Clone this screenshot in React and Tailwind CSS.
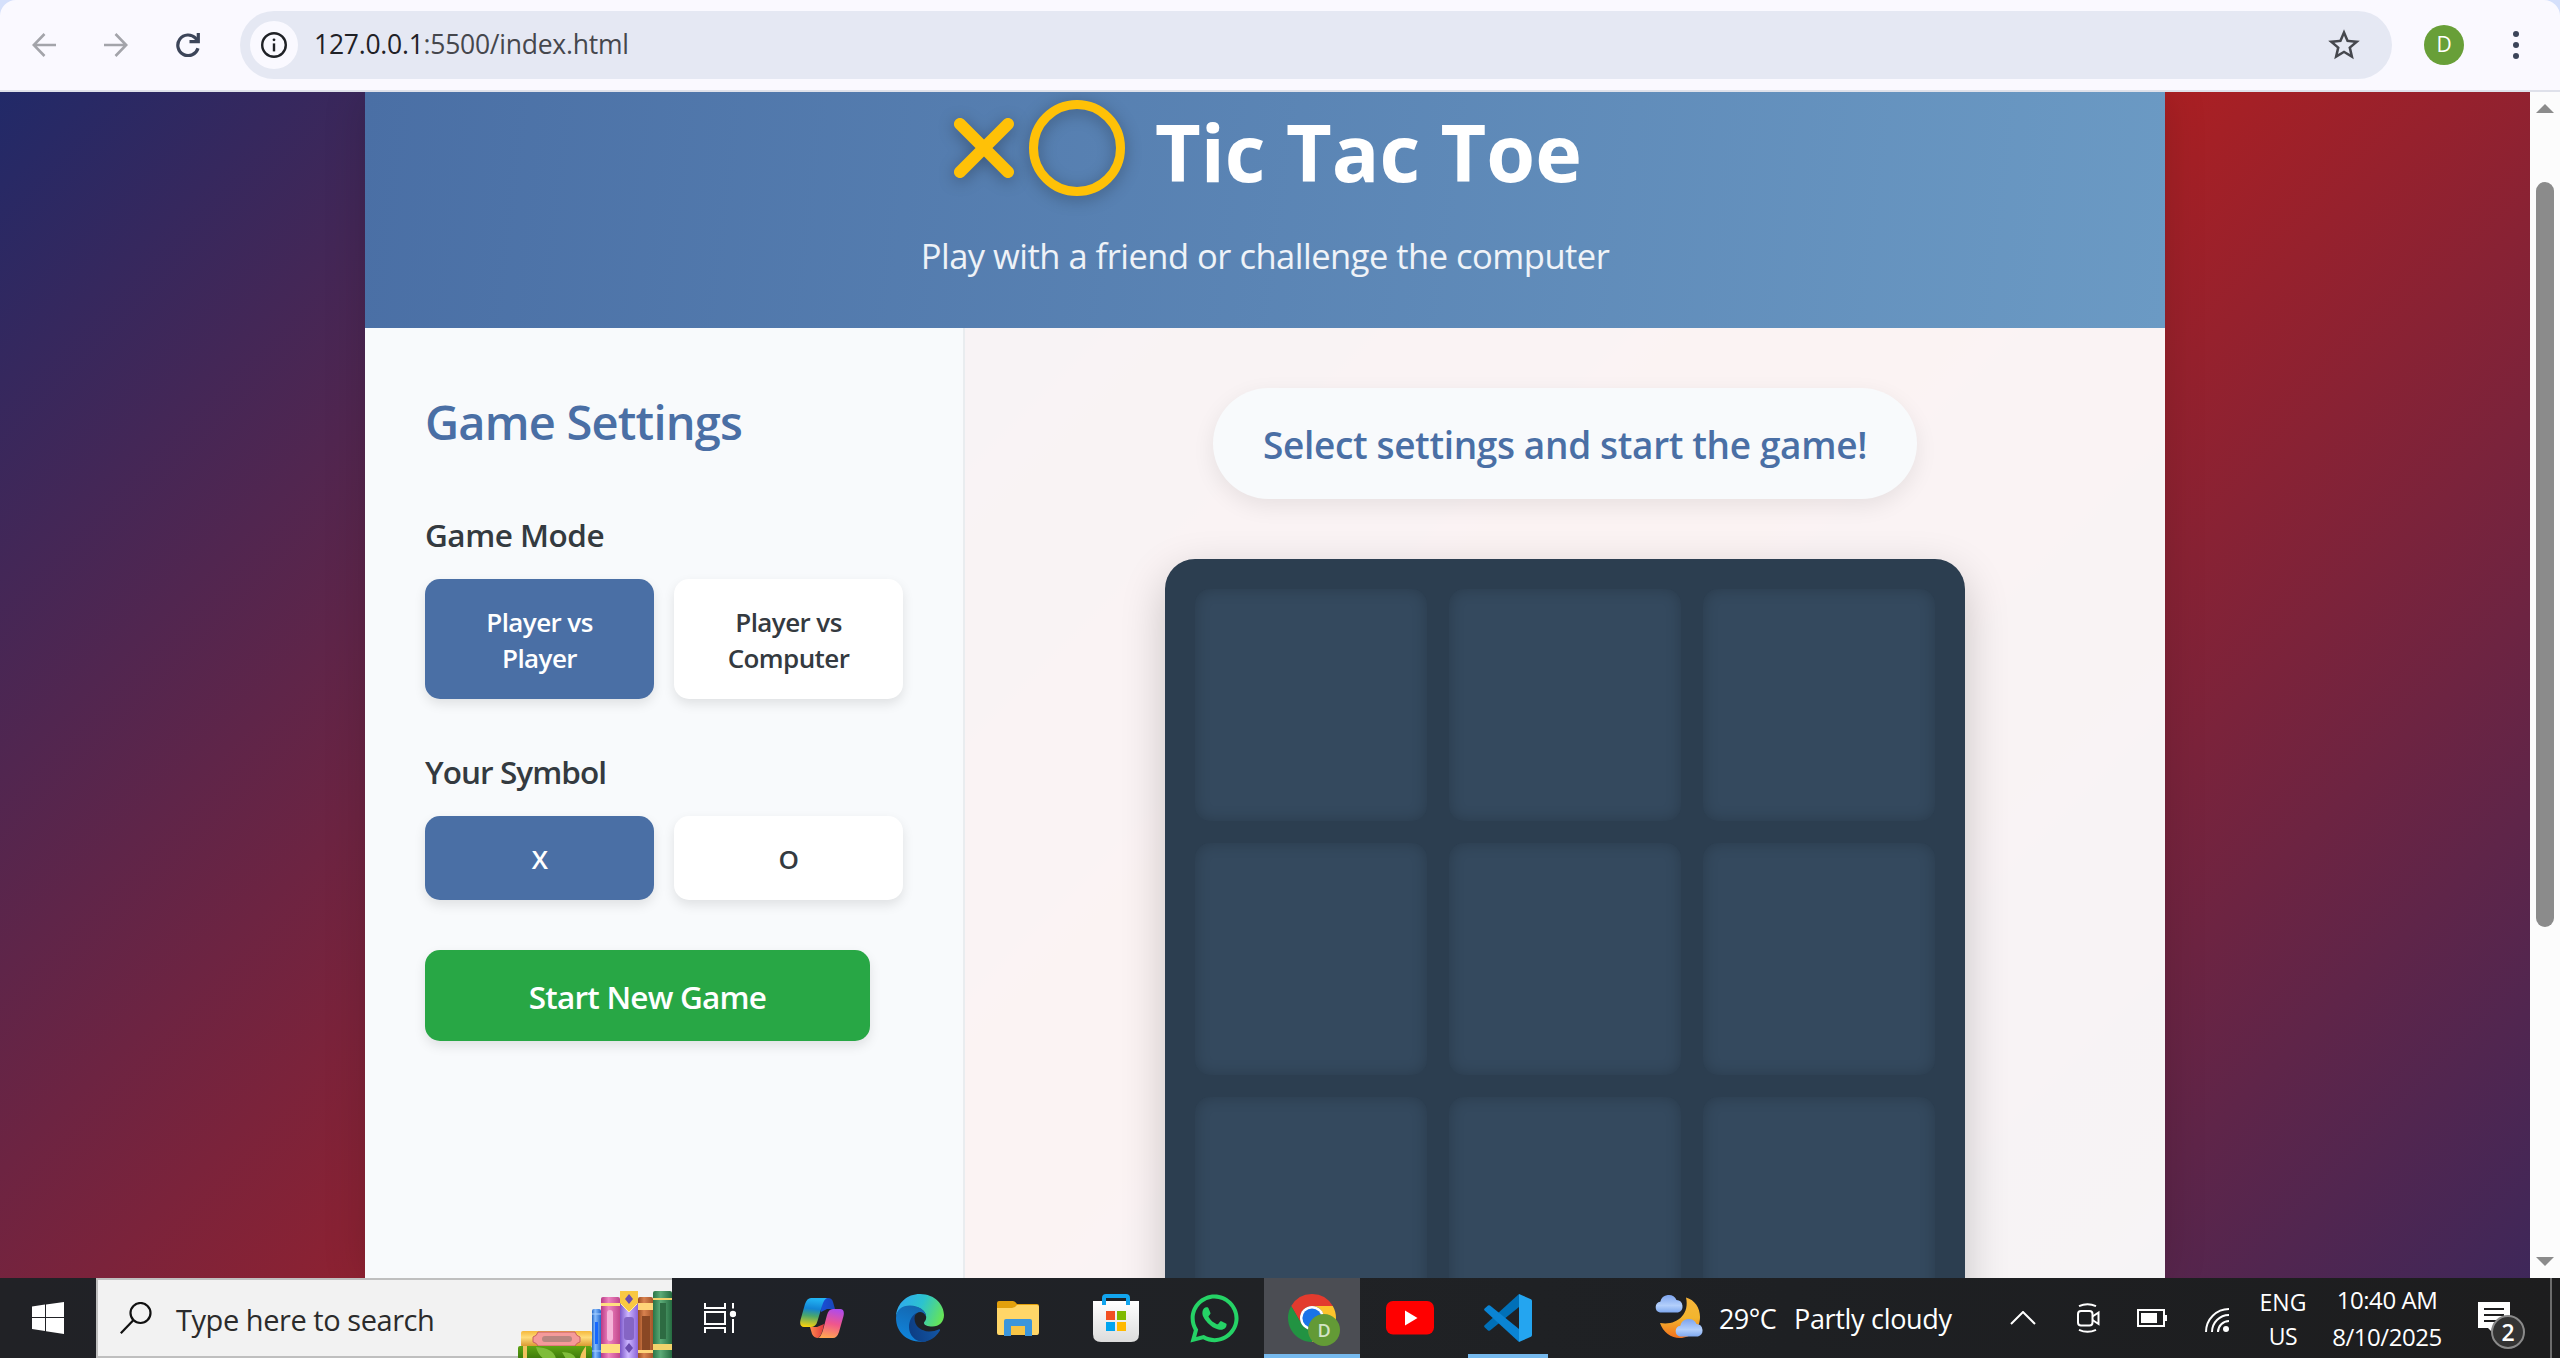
import { MdStarOutline } from "react-icons/md";
import { FaWhatsapp } from "react-icons/fa";

/* ---------- Browser toolbar ---------- */

function ArrowIcon({ flip }) {
  return (
    <svg viewBox="0 0 24 24" className={flip ? "size-6 rotate-180" : "size-6"} fill="none" stroke="#a3a4aa" strokeWidth="2.6">
      <path d="M24 12H2.5M12.5 1 1.8 12l10.7 11" />
    </svg>
  );
}

function ReloadIcon() {
  return (
    <svg viewBox="0 0 25 24" className="h-6 w-[25px]" fill="none" stroke="#3c4559" strokeWidth="3.2">
      <path d="M23 15.2A10.3 10.3 0 1 1 20.6 5.2L23 8.2" />
      <path d="M23.3 0v8.6h-8.8" />
    </svg>
  );
}

function InfoIcon() {
  return (
    <svg viewBox="0 0 26 26" className="size-[26px]" fill="none" stroke="#1f2126">
      <circle cx="13" cy="13" r="11.8" strokeWidth="2.4" />
      <path d="M13 11.4v8" strokeWidth="2.4" />
      <circle cx="13" cy="7.8" r="1.4" fill="#1f2126" stroke="none" />
    </svg>
  );
}

function Toolbar() {
  return (
    <div className="h-[92px] shrink-0 bg-[#d5e0fb]">
      <div className="flex h-full items-center rounded-t-2xl border-b-2 border-[#dfe1ea] bg-[#faf9ff] pl-8">
        <div className="flex w-52 items-center pb-px">
          <ArrowIcon />
          <div className="ml-12"><ArrowIcon flip /></div>
          <div className="ml-[47px]"><ReloadIcon /></div>
        </div>
        <div className="mb-px flex h-[68px] w-[2152px] items-center rounded-full bg-[#e5e8f3] pr-[29px] pl-[10px]">
          <div className="flex size-12 items-center justify-center rounded-full bg-[#faf9ff]"><InfoIcon /></div>
          <div className="ml-4 grow pb-0.5 text-[26.5px] leading-10 tracking-[-0.25px] text-[#45474d]">
            <span className="text-[#1f2126]">127.0.0.1</span>:5500/index.html
          </div>
          <MdStarOutline size={38} color="#45474d" />
        </div>
        <div className="ml-8 flex size-10 items-center justify-center rounded-full bg-[#689f38] text-[21px] text-white">D</div>
        <div className="ml-[49px] flex flex-col gap-[5px]">
          <i className="size-1.5 rounded-full bg-[#3c4559]" />
          <i className="size-1.5 rounded-full bg-[#3c4559]" />
          <i className="size-1.5 rounded-full bg-[#3c4559]" />
        </div>
      </div>
    </div>
  );
}

function Scrollbar() {
  return (
    <div className="flex w-[30px] flex-col items-center bg-[#fcfcfc] pt-3 pb-3">
      <svg viewBox="0 0 18 9" className="h-[9px] w-[18px]"><path d="M0 9 9 0l9 9z" fill="#8b8b8b" /></svg>
      <div className="mt-[69px] h-[745px] w-[18px] rounded-full bg-[#8b8b8b]" />
      <svg viewBox="0 0 18 9" className="mt-auto h-[9px] w-[18px]"><path d="M0 0h18L9 9z" fill="#8b8b8b" /></svg>
    </div>
  );
}

/* ---------- Game page ---------- */

function Header() {
  return (
    <header className="h-[236px] shrink-0 bg-[linear-gradient(97deg,#4a6fa5,#6b9ac4)] text-white">
      <div className="flex h-28 items-center justify-center">
        <svg viewBox="0 0 384 512" className="h-24 w-[72px] overflow-visible drop-shadow-[0_3px_8px_rgba(0,0,0,0.3)]" fill="#ffc107">
          <path d="M342.6 150.6c12.5-12.5 12.5-32.8 0-45.3s-32.8-12.5-45.3 0L192 210.7 86.6 105.4c-12.5-12.5-32.8-12.5-45.3 0s-12.5 32.8 0 45.3L146.7 256 41.4 361.4c-12.5 12.5-12.5 32.8 0 45.3s32.8 12.5 45.3 0L192 301.3 297.4 406.6c12.5 12.5 32.8 12.5 45.3 0s12.5-32.8 0-45.3L237.3 256 342.6 150.6z" />
        </svg>
        <svg viewBox="0 0 96 96" className="ml-[9px] size-24 overflow-visible drop-shadow-[0_3px_8px_rgba(0,0,0,0.3)]" fill="none">
          <circle cx="48" cy="48" r="43.5" stroke="#ffc107" strokeWidth="9" />
        </svg>
        <h1 className="ml-[30px] pt-2 text-[79px] leading-[100px] font-bold">Tic Tac Toe</h1>
      </div>
      <p className="mt-7 text-center text-[34.5px] leading-[48px] tracking-[-0.5px] text-white/90">
        Play with a friend or challenge the computer
      </p>
    </header>
  );
}

function Option({ active, tall, children }) {
  return (
    <button
      className={`flex w-[229px] items-center justify-center rounded-[15px] px-10 pt-0.5 text-[26px] leading-9 font-semibold tracking-[-0.58px] shadow-[0_5px_12px_rgba(0,0,0,0.1)] ${
        tall ? "h-[120px]" : "h-[84px]"
      } ${active ? "bg-[#4a6fa5] text-white" : "bg-white text-[#343a40]"}`}
    >
      {children}
    </button>
  );
}

function Settings() {
  return (
    <aside className="w-[600px] shrink-0 border-r-2 border-[#e9ecef] bg-[#f8fafc] pt-16 pl-[60px] text-[#343a40]">
      <h2 className="text-[47px] leading-[60px] font-semibold tracking-[-0.8px] text-[#4a6fa5]">Game Settings</h2>
      <h3 className="mt-[63px] text-[31.5px] leading-10 font-semibold tracking-[-0.5px]">Game Mode</h3>
      <div className="mt-6 flex gap-5">
        <Option active tall>Player vs Player</Option>
        <Option tall>Player vs Computer</Option>
      </div>
      <h3 className="mt-[53px] text-[31.5px] leading-10 font-semibold tracking-[-0.95px]">Your Symbol</h3>
      <div className="mt-6 flex gap-5">
        <Option active>X</Option>
        <Option>O</Option>
      </div>
      <button className="mt-[50px] flex h-[91px] w-[445px] items-center justify-center rounded-[15px] bg-[#28a745] pt-0.5 text-[31.5px] font-semibold tracking-[-0.78px] text-white shadow-[0_5px_12px_rgba(0,0,0,0.1)]">
        Start New Game
      </button>
    </aside>
  );
}

function Board() {
  return (
    <div className="mt-[60px] grid size-[800px] shrink-0 grid-cols-3 grid-rows-3 gap-[22.5px] rounded-[30px] bg-[#2c3e50] p-[30px] shadow-[0_15px_45px_rgba(0,0,0,0.2)]">
      {Array.from({ length: 9 }, (_, i) => (
        <div key={i} className="rounded-[15px] bg-[#34495e] shadow-[inset_0_0_15px_rgba(0,0,0,0.2)]" />
      ))}
    </div>
  );
}

function GamePage() {
  return (
    <div className="flex grow justify-center overflow-hidden bg-[linear-gradient(135deg,#1a2a6c,#b21f1f,#1a2a6c)] bg-[length:2530px_1807px] bg-[position:0_-104px]">
      <div className="flex w-[1800px] flex-col bg-white/95 shadow-[0_0_40px_rgba(0,0,0,0.15)]">
        <Header />
        <div className="flex h-[950px] overflow-hidden">
          <Settings />
          <main className="flex grow flex-col items-center pt-[60px]">
            <div className="flex h-[111px] w-[704px] shrink-0 items-center justify-center rounded-full bg-[#f8fafc] pt-0.5 text-[37px] font-semibold tracking-[-0.35px] text-[#4a6fa5] shadow-[0_7px_22px_rgba(0,0,0,0.08)]">
              Select settings and start the game!
            </div>
            <Board />
          </main>
        </div>
      </div>
    </div>
  );
}

/* ---------- Taskbar icons ---------- */

function Books() {
  return (
    <svg viewBox="0 0 154 68" className="h-[68px] w-[154px]">
      <defs>
        <linearGradient id="bGold" x2="0" y2="1"><stop stopColor="#f5b83c" /><stop offset=".4" stopColor="#ffdc7a" /><stop offset="1" stopColor="#d6922a" /></linearGradient>
        <linearGradient id="bPink"><stop stopColor="#b93a86" /><stop offset=".4" stopColor="#ee84bf" /><stop offset="1" stopColor="#c1478c" /></linearGradient>
        <linearGradient id="bViolet"><stop stopColor="#7a55c8" /><stop offset=".45" stopColor="#ccb6ff" /><stop offset="1" stopColor="#8a63d8" /></linearGradient>
        <linearGradient id="bBrown"><stop stopColor="#9a4c22" /><stop offset=".4" stopColor="#d9824f" /><stop offset="1" stopColor="#a5552a" /></linearGradient>
        <linearGradient id="bGreen"><stop stopColor="#2a7547" /><stop offset=".4" stopColor="#5cab77" /><stop offset="1" stopColor="#256b40" /></linearGradient>
        <linearGradient id="bBlue"><stop stopColor="#2265c4" /><stop offset=".35" stopColor="#86bcff" /><stop offset="1" stopColor="#2468cc" /></linearGradient>
        <linearGradient id="bLeaf" x2="0" y2="1"><stop stopColor="#5fa414" /><stop offset="1" stopColor="#3c7a0a" /></linearGradient>
      </defs>
      <rect x="3" y="40" width="71" height="16" rx="2" fill="url(#bGold)" />
      <path d="M20 41h37q1 4 5 5v5q-4 1-5 4H20q-1-3-5-4v-5q4-1 5-5z" fill="#f59a9a" stroke="#c85f5f" />
      <rect x="24" y="45" width="30" height="6" rx="3" fill="#b98580" />
      <rect y="55" width="74" height="13" rx="2" fill="url(#bLeaf)" />
      <path d="M18 56q18 1 20 12H26q-6-4-8-12zM44 61q12 0 14 7H48z" fill="#7fbd3a" />
      <path d="M5 55h4v13H5zM68 55v13h-6q0-5 6-13z" fill="#f2c25e" />
      <rect x="74" y="18" width="9" height="50" rx="2" fill="url(#bBlue)" />
      <path d="M77 31h3v22h-3z" fill="#1668ff" /><path d="M74 23h9M74 60h9" stroke="#a8d0ff" />
      <rect x="83" y="6" width="19" height="62" rx="2" fill="url(#bPink)" />
      <path d="M83 12h19v3H83zM83 53h19v9H83z" fill="#ffdf80" /><rect x="89" y="19" width="6" height="31" rx="3" fill="#f5b5d9" />
      <rect x="102" width="18" height="68" rx="2" fill="url(#bViolet)" />
      <path d="M102 0h18v12l-9 9-9-9z" fill="#f9c842" /><path d="m103 13 8 8 8-8" fill="none" stroke="#fff0a0" />
      <path d="m111 3 4 5-4 5-4-5zM111 52l4 5-4 5-4-5z" fill="#6b4cae" /><rect x="106" y="26" width="10" height="23" rx="3" fill="#8565c4" />
      <rect x="120" y="6" width="15" height="62" rx="2" fill="url(#bBrown)" />
      <path d="M120 12h15v7h-15zM120 59h15v3h-15z" fill="#ffd478" /><path d="M124 25h8v34h-8z" fill="#8a4724" />
      <rect x="135" width="19" height="68" rx="2" fill="url(#bGreen)" />
      <path d="M135 7h19v2h-19zM135 53h19v6h-19z" fill="#f2d36c" /><path d="M142 12h6v36h-6z" fill="#2d6b42" />
    </svg>
  );
}

function TaskViewIcon() {
  return (
    <svg viewBox="0 0 32 30" className="h-[30px] w-8" fill="none" stroke="#fff" strokeWidth="2">
      <path d="M1 0v5h20V0M1 9h20v12H1zM1 30v-5h20v5M29 0v5.5M29 16v14" />
      <circle cx="29" cy="11" r="3.2" fill="#fff" stroke="none" />
    </svg>
  );
}

function CopilotIcon() {
  return (
    <svg viewBox="0 0 44 40" className="h-10 w-11">
      <defs>
        <linearGradient id="cA" x1=".3" x2=".2" y2="1"><stop stopColor="#22b4f4" /><stop offset=".35" stopColor="#1284d4" /><stop offset=".6" stopColor="#4aa66c" /><stop offset="1" stopColor="#ffd30a" /></linearGradient>
        <linearGradient id="cB" x1=".6" x2=".4" y2="1"><stop stopColor="#b04bea" /><stop offset=".5" stopColor="#f0568c" /><stop offset="1" stopColor="#ffa552" /></linearGradient>
        <linearGradient id="cC"><stop stopColor="#1a4fd8" /><stop offset="1" stopColor="#1846b8" /></linearGradient>
        <linearGradient id="cD"><stop stopColor="#ff8a4c" /><stop offset="1" stopColor="#e0363e" /></linearGradient>
      </defs>
      <path d="M24 0h4q4 0 5 4l2 7h-8l-6 3q0-10 3-14z" fill="url(#cC)" />
      <path d="M10 29h7l7-3q-2 12-6 14-4 0-6-4z" fill="url(#cD)" />
      <path d="M11 0h16q-3 1-5 8l-4.5 15q-1.5 6-7 6H4q-5 0-3.500-7L5 6q2-6 6-6z" fill="url(#cA)" />
      <path d="M33 11h7q5 0 3.500 7L39 34q-2 6-6 6H18q3-1 5-8l4-15q1.500-6 6-6z" fill="url(#cB)" />
    </svg>
  );
}

function EdgeIcon() {
  return (
    <svg viewBox="0 0 48 48" className="size-12">
      <defs>
        <linearGradient id="eA" y1=".3" y2=".6"><stop stopColor="#2fa8f0" /><stop offset=".5" stopColor="#2cc3cf" /><stop offset="1" stopColor="#66e457" /></linearGradient>
        <linearGradient id="eB" x1=".6" x2=".3" y2="1"><stop stopColor="#1467b0" /><stop offset="1" stopColor="#0f86de" /></linearGradient>
        <linearGradient id="eC" y1=".2"><stop stopColor="#0d3f86" /><stop offset="1" stopColor="#1459a8" /></linearGradient>
      </defs>
      <path d="M0 22C1 9 11 0 24 0c15 0 24 11 24 21 0 7-5 11.5-11.5 11.5-5 0-8.5-1.5-8.5-3.5 0-1.5 2.2-2 2.200-6C30 16 23 13 15 12 7 12 2 16 0 22z" fill="url(#eA)" />
      <path d="M0 24C0 16 6 11.5 14 11.5c9 0 16 5 16 11C28 18 24 17 21 19c-7 4-4 17 8 18l1 10.2C14 50 0 40 0 24z" fill="url(#eB)" />
      <path d="M21 18.500c-2 1.500-2.500 4-2.500 6C18.500 32 25 37.500 33 37.500c4 0 7-.9 9.500-2 1.200-.5 2 .3 1.300 1.300C40 43 34 47.500 27 48c-8-.5-14-7-14-15 0-7 3.500-12 8-14.500z" fill="url(#eC)" />
    </svg>
  );
}

function FolderIcon() {
  return (
    <svg viewBox="0 0 42 35" className="h-[35px] w-[42px]">
      <path d="M0 2q0-2 2-2h14q2 0 4 3h20q2 0 2 2v8H0z" fill="#e2a00c" />
      <path d="M0 7h15q3 0 5-3h20q2 0 2 2v25q0 3-2 3H2q-2 0-2-2z" fill="#ffd668" />
      <path d="M7 35V20q0-2 2-2h24q2 0 2 2v15h-7V25H14v10z" fill="#3c96dc" />
      <path d="M14 25h14v9H14z" fill="#f7c445" />
    </svg>
  );
}

function StoreIcon() {
  return (
    <svg viewBox="0 0 46 48" className="h-12 w-[46px]">
      <defs><linearGradient id="sBag" x2="0" y2="1"><stop stopColor="#fff" /><stop offset="1" stopColor="#dcdcdc" /></linearGradient></defs>
      <path d="M0 7h46v33q0 8-8 8H8q-8 0-8-8z" fill="url(#sBag)" />
      <path d="M11 11V4q0-2 2-2h20q2 0 2 2v7" fill="none" stroke="#12a5ee" strokeWidth="4" />
      <path d="M13 17h9v9h-9z" fill="#f25022" /><path d="M24 17h9v9h-9z" fill="#7fba00" />
      <path d="M13 28h9v9h-9z" fill="#00a4ef" /><path d="M24 28h9v9h-9z" fill="#ffb900" />
    </svg>
  );
}

function ChromeIcon() {
  return (
    <div className="relative size-12">
      <svg viewBox="0 0 48 48" className="size-12">
        <path d="M24 12h20.780A24 24 0 0 0 3.210 12L13.610 30A12 12 0 0 1 24 12z" fill="#e33b2e" />
        <path d="M34.390 30 24 48A24 24 0 0 0 44.780 12H24a12 12 0 0 1 10.390 18z" fill="#fcc42c" />
        <path d="M13.610 30 3.220 12A24 24 0 0 0 24 48l10.390-18a12 12 0 0 1-20.780 0z" fill="#229342" />
        <circle cx="24" cy="24" r="12" fill="#fff" />
        <circle cx="24" cy="24" r="9.6" fill="#1a73e8" />
      </svg>
      <div className="absolute top-5 left-5 flex size-8 items-center justify-center rounded-full bg-[#639a36] text-[18px] font-semibold text-[#d3e4c4]">D</div>
    </div>
  );
}

function YouTubeIcon() {
  return (
    <svg viewBox="0 0 48 34" className="h-[34px] w-12">
      <rect width="48" height="33.5" rx="7" fill="#f00" />
      <path d="M19 9.5 31.5 17 19 24.5z" fill="#fff" />
    </svg>
  );
}

function VsCodeIcon() {
  return (
    <svg viewBox="0 0 48 48" className="size-12">
      <path d="M35 0v13L6 36.500q-1 .6-2 0L.6 33.200q-1-1 0-2z" fill="#0070b8" />
      <path d="M35 48V35L6 11.500q-1-.6-2 0L.6 14.500q-1 1 0 2z" fill="#0a84d4" />
      <path d="M35 0 47 5.200q1 .5 1 1.700v34.200q0 1.200-1 1.700L35 48z" fill="#24a5f0" />
    </svg>
  );
}

function WeatherIcon() {
  const cloud = "M5 18.500a5.500 5.500 0 0 1 .3-10.800A8.600 8.600 0 0 1 21.500 6 6.400 6.400 0 0 1 23 18.500z";
  return (
    <svg viewBox="0 0 48 44" className="h-11 w-12">
      <defs>
        <linearGradient id="wMoon" x2="0" y2="1"><stop stopColor="#f9b53a" /><stop offset=".5" stopColor="#f2b52e" /><stop offset="1" stopColor="#f2701c" /></linearGradient>
        <linearGradient id="wCloud" x2="0" y2="1"><stop stopColor="#7da4ee" /><stop offset=".6" stopColor="#b3cffb" /><stop offset="1" stopColor="#7fa8ee" /></linearGradient>
      </defs>
      <path d="M31 3.500C40 6 45 14 45 23c0 12-9 21-20 21-9 0-17-6-20-15 16 3 30-8 26-25.500z" fill="url(#wMoon)" />
      <path d={cloud} fill="url(#wCloud)" />
      <path d={cloud} transform="translate(20 24)" fill="url(#wCloud)" />
    </svg>
  );
}

function Tile({ tone, bar, children }) {
  return (
    <div className={`flex h-20 w-24 shrink-0 flex-col items-center ${tone || ""}`}>
      <div className="flex h-[76px] items-center justify-center pt-1">{children}</div>
      <div className={`h-1 ${bar || ""}`} />
    </div>
  );
}

function Taskbar() {
  return (
    <footer className="flex h-20 shrink-0 items-center bg-[linear-gradient(90deg,#212226,#1f2228_28%,#202225_50%,#1e2023_70%,#1d1d1e)] text-white">
      <div className="flex w-24 justify-center">
        <svg viewBox="0 0 32 32" className="size-8" fill="#fff">
          <path d="M0 4.500 13 2.600V15H0zM14 2.400 32 0v15H14zM0 16h13v12.900L0 27zM14 16h18v16l-18-2.700z" />
        </svg>
      </div>
      <div className="flex h-20 w-[576px] items-center border-2 border-r-0 border-[#bfbfbf] bg-[#f2f2f2] pl-[22px]">
        <svg viewBox="0 0 32 32" className="size-8" fill="none" stroke="#111" strokeWidth="2.2">
          <circle cx="20.500" cy="11" r="10" /><path d="M13.300 18.300.8 31.200" />
        </svg>
        <div className="ml-6 grow pt-[3px] text-[29px] tracking-[-0.45px] whitespace-nowrap text-[#2b2b2b]">Type here to search</div>
        <div className="mt-3 -mb-0.5 shrink-0"><Books /></div>
      </div>
      <Tile><TaskViewIcon /></Tile>
      <div className="ml-1.5 flex gap-0.5">
        <Tile><CopilotIcon /></Tile>
        <Tile><EdgeIcon /></Tile>
        <Tile><FolderIcon /></Tile>
        <Tile><StoreIcon /></Tile>
        <Tile><FaWhatsapp size={55} color="#25d366" /></Tile>
        <Tile tone="bg-[#4b4d53]" bar="w-24 bg-[#76b9ed]"><ChromeIcon /></Tile>
        <Tile><YouTubeIcon /></Tile>
        <Tile bar="w-20 bg-[#76b9ed]"><VsCodeIcon /></Tile>
      </div>
      <div className="ml-[99px] pb-1"><WeatherIcon /></div>
      <div className="ml-4 w-[75px] pt-0.5 text-[27px] tracking-[-0.6px]">29°C</div>
      <div className="w-[216px] pt-0.5 text-[27px] tracking-[-0.32px]">Partly cloudy</div>
      <svg viewBox="0 0 26 14" className="h-3.5 w-[26px]" fill="none" stroke="#fff" strokeWidth="2"><path d="m1 13 12-12 12 12" /></svg>
      <svg viewBox="0 0 24 30" className="ml-[41px] h-[30px] w-6" fill="none" stroke="#fff" strokeWidth="2">
        <rect x="1" y="8" width="14.500" height="14.500" rx="3" />
        <path d="m15.500 13.500 6-4v11.500l-6-4M2 3.200q8.500-4 17 0M2 26.800q8.500 4 17 0" />
      </svg>
      <svg viewBox="0 0 30 18" className="ml-9 h-[18px] w-[30px]" fill="none" stroke="#fff" strokeWidth="2">
        <path d="M1 1h26v16H1z" /><path d="M4 4h16v10H4zM28 6h2v6h-2z" fill="#fff" stroke="none" />
      </svg>
      <svg viewBox="0 0 24 24" className="mt-1 ml-[38px] h-6 w-6" fill="none" stroke="#fff" strokeWidth="2">
        <path d="M1 24A23 23 0 0 1 24 1M7 24A17 17 0 0 1 24 7M13 24A11 11 0 0 1 24 13" />
        <circle cx="21" cy="21" r="3" fill="#fff" stroke="none" />
      </svg>
      <div className="ml-6 h-20 w-[60px] pt-[7px] text-center text-[23px] leading-[34px]">
        <div>ENG</div>
        <div className="tracking-[-0.4px]">US</div>
      </div>
      <div className="ml-[13px] h-20 w-[122px] pt-[3px] text-center text-[24px] leading-[37px] tracking-[-0.45px] whitespace-nowrap">
        <div>10:40 AM</div>
        <div>8/10/2025</div>
      </div>
      <div className="relative ml-[30px] h-20 w-12 pt-6">
        <svg viewBox="0 0 32 30" className="h-[30px] w-8">
          <path d="M0 0h32v26H18l-4 4-4-4H0z" fill="#fff" />
          <path d="M6 7h20M6 13h20M6 19h20" stroke="#1d1d1e" strokeWidth="2" />
        </svg>
        <div className="absolute top-[37px] left-[13px] flex size-[34px] items-center justify-center rounded-full border-2 border-[#8a8a8a] bg-[#333333] text-[23px] leading-none font-semibold">2</div>
      </div>
      <div className="ml-6 h-20 w-0.5 bg-[#6d6d6d]" />
    </footer>
  );
}

export default function App() {
  return (
    <div className="flex h-[1358px] w-[2560px] flex-col overflow-hidden font-['Open_Sans','Noto_Sans',sans-serif]">
      <Toolbar />
      <div className="flex h-[1186px] shrink-0">
        <GamePage />
        <Scrollbar />
      </div>
      <Taskbar />
    </div>
  );
}
